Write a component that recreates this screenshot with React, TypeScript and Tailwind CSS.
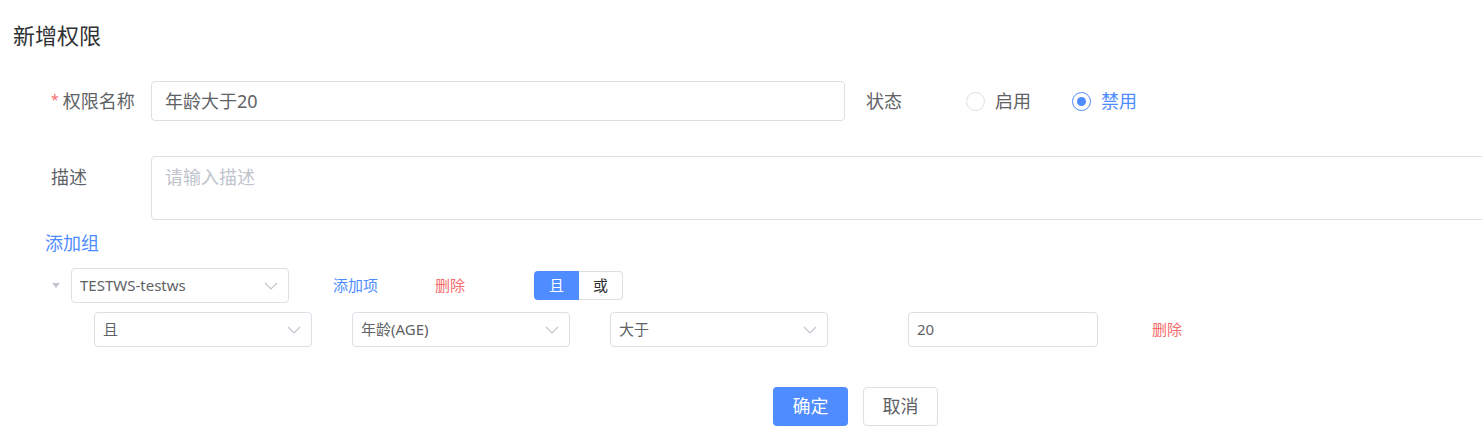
import React from "react";

const Chevron = () => (
  <svg width="14" height="8" viewBox="0 0 14 8" fill="none">
    <polyline points="1,1 7,7 13,1" stroke="#c0c4cc" strokeWidth="1.1" />
  </svg>
);

const Select = ({ value }: { value: string }) => (
  <div className="w-[218px] h-[35px] border border-[#dcdfe6] rounded-[4px] bg-white flex items-center justify-between pl-[8px] pr-[10px] text-[15px] text-[#606266]">
    <span className="leading-none">{value}</span>
    <Chevron />
  </div>
);

export default function App() {
  return (
    <div
      className="w-[1482px] h-[428px] overflow-hidden bg-white text-[#606266]"
      style={{ fontFamily: '"Noto Sans", "Noto Sans CJK SC", sans-serif' }}
    >
      <div className="h-[70px] flex items-center pl-[13px] text-[22px] text-[#303133]">新增权限</div>

      <div className="mt-[11px] flex items-center pl-[51px]">
        <div className="w-[100px] shrink-0 text-[18px] flex items-center">
          <span className="text-[#f56c6c] text-[14px] mr-[4px] -mt-[4px]">*</span>
          <span>权限名称</span>
        </div>
        <div className="w-[694px] shrink-0 h-[40px] border border-[#dcdfe6] rounded-[4px] flex items-center pl-[13px] text-[18px] text-[#606266]">
          年龄大于20
        </div>
        <div className="ml-[21px] w-[100px] shrink-0 text-[18px]">状态</div>
        <div className="flex items-center text-[18px]">
          <span className="w-[19px] h-[19px] rounded-full border border-[#dcdfe6] bg-white"></span>
          <span className="ml-[10px]">启用</span>
          <span className="ml-[41px] w-[19px] h-[19px] rounded-full border border-[#4e8cff] flex items-center justify-center">
            <span className="w-[9px] h-[9px] rounded-full bg-[#4e8cff]"></span>
          </span>
          <span className="ml-[10px] text-[#4e8cff]">禁用</span>
        </div>
      </div>

      <div className="mt-[35px] flex items-start pl-[51px]">
        <div className="w-[100px] shrink-0 text-[18px] pt-[8px]">描述</div>
        <div className="w-[1400px] h-[64px] border border-[#dcdfe6] rounded-[4px] pl-[13px] pt-[7px] text-[18px] text-[#c0c4cc] shrink-0">
          请输入描述
        </div>
      </div>

      <div className="mt-[11px] pl-[45px] text-[18px] text-[#4e8cff] leading-[24px]">添加组</div>

      <div className="mt-[13px] flex items-center pl-[52px]">
        <svg width="8" height="5" viewBox="0 0 8 5" className="shrink-0">
          <polygon points="0,0 8,0 4,5" fill="#c0c4cc" />
        </svg>
        <div className="ml-[11px]">
          <Select value="TESTWS-testws" />
        </div>
        <span className="ml-[44px] text-[15px] text-[#4e8cff]">添加项</span>
        <span className="ml-[57px] text-[15px] text-[#f56c6c]">删除</span>
        <div className="ml-[69px] flex h-[29px] text-[15px]">
          <div className="w-[45px] bg-[#4e8cff] text-white rounded-l-[4px] flex items-center justify-center">且</div>
          <div className="w-[44px] border border-l-0 border-[#dcdfe6] rounded-r-[4px] flex items-center justify-center text-[#303133]">或</div>
        </div>
      </div>

      <div className="mt-[9px] flex items-center pl-[94px]">
        <Select value="且" />
        <div className="ml-[40px]">
          <Select value="年龄(AGE)" />
        </div>
        <div className="ml-[40px]">
          <Select value="大于" />
        </div>
        <div className="ml-[80px] w-[190px] h-[35px] border border-[#dcdfe6] rounded-[4px] flex items-center pl-[8px] text-[15px]">
          20
        </div>
        <span className="ml-[54px] text-[15px] text-[#f56c6c]">删除</span>
      </div>

      <div className="mt-[40px] flex pl-[773px] gap-[15px]">
        <div className="w-[75px] h-[39px] rounded-[4px] bg-[#4e8cff] text-white text-[18px] flex items-center justify-center">确定</div>
        <div className="w-[75px] h-[39px] rounded-[4px] border border-[#dcdfe6] text-[18px] flex items-center justify-center">取消</div>
      </div>
    </div>
  );
}
